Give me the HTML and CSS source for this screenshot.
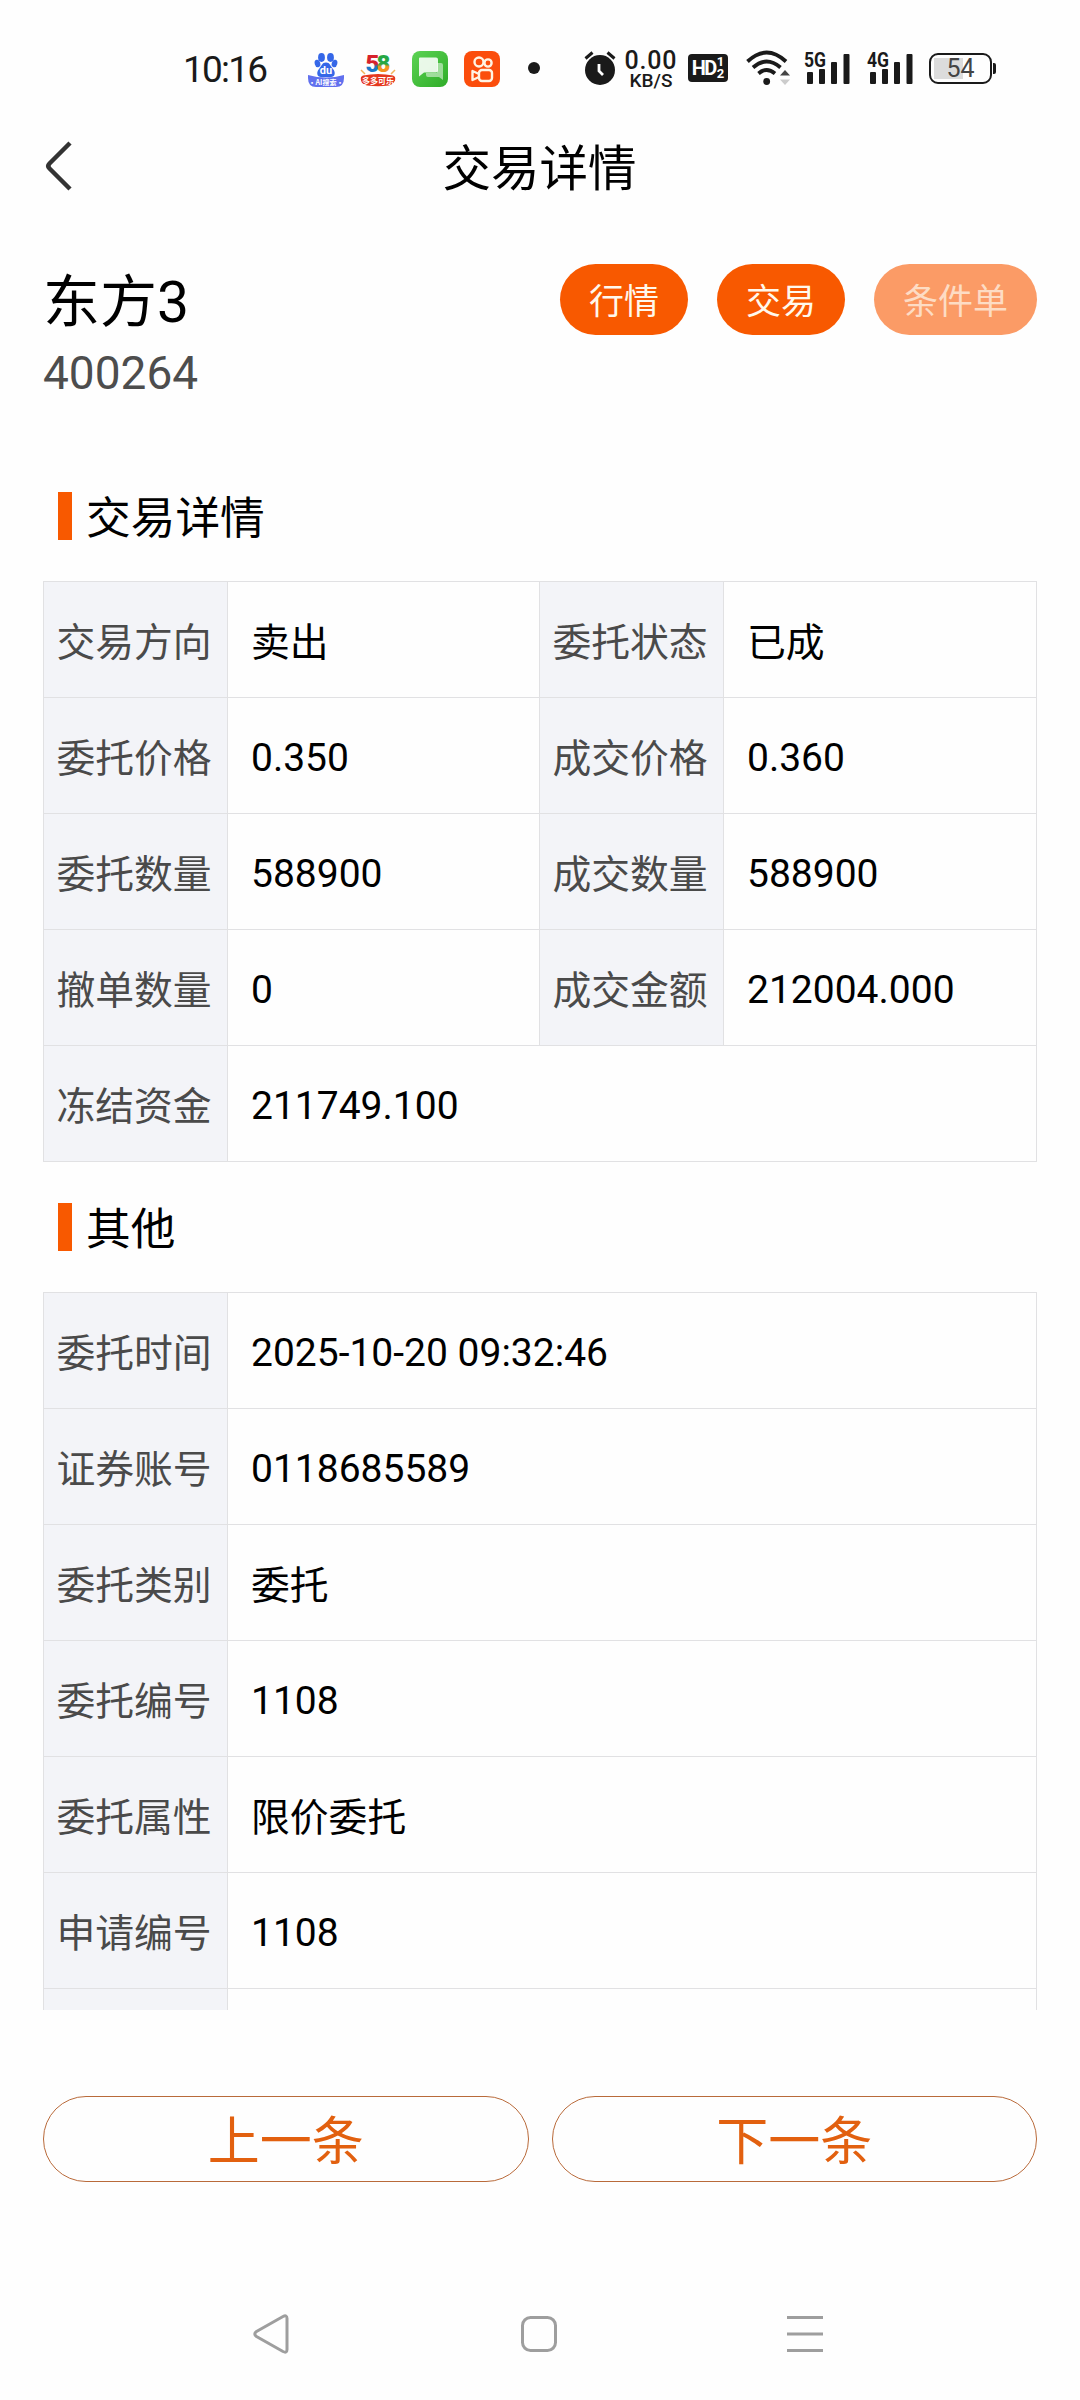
FILE: index.html
```html
<!DOCTYPE html>
<html lang="zh-CN">

<head>
    <meta charset="UTF-8">
    <meta name="viewport" content="width=device-width, initial-scale=1.0">
    <title>交易详情</title>
    <link rel="stylesheet" href="styles.css">
</head>

<body>
    <!-- 状态栏 -->
    <div class="status-bar">
        <span class="time">10:16</span>
        <div class="app-icons">
            <svg width="36" height="38" viewBox="0 0 36 38">
                <g fill="#3567e8">
                    <ellipse cx="13.500" cy="7.500" rx="3.400" ry="4.400"/>
                    <ellipse cx="22.500" cy="7.500" rx="3.400" ry="4.400"/>
                    <ellipse cx="9.500" cy="13.500" rx="2.800" ry="3.800" transform="rotate(-15 9.500 13.500)"/>
                    <ellipse cx="26.500" cy="13.500" rx="2.800" ry="3.800" transform="rotate(15 26.500 13.500)"/>
                    <path d="M18 12.500c4 0 4.500 3.500 7 6.500 3 3.500 2 8-2 8H13c-4 0-5-4.500-2-8 2.500-3 3-6.500 7-6.500z"/>
                </g>
                <text x="18" y="24" class="du">du</text>
                <path d="M0 25q18 5 36 0v3q0 9-8 9H8q-8 0-8-9z" fill="#6170ee"/>
                <text x="18" y="34.500" class="baidu-tag">·AI搜索·</text>
            </svg>
            <svg width="36" height="38" viewBox="0 0 36 38">
                <defs>
                    <linearGradient id="five" x1="0" y1="0" x2="0" y2="1">
                        <stop offset="0.500" stop-color="#d7222c"/>
                        <stop offset="0.600" stop-color="#1b78c8"/>
                    </linearGradient>
                    <linearGradient id="eight" x1="0" y1="0" x2="0" y2="1">
                        <stop offset="0.500" stop-color="#26a744"/>
                        <stop offset="0.600" stop-color="#f39423"/>
                    </linearGradient>
                </defs>
                <text x="5.500" y="22" class="num58" fill="url(#five)">5</text>
                <text x="16.500" y="22" class="num58" fill="url(#eight)">8</text>
                <path d="M1 20l4 4M35 20l-4 4" stroke="#f2b45a" stroke-width="1.500"/>
                <path d="M3 25.500q15-3 30 0 3 1 2 5-2 4-6 5-11 1.500-22 0-5-1-6-5-1-4 2-5z" fill="#e5381f"/>
                <text x="18" y="34" class="tag58">多多可乐</text>
            </svg>
            <svg width="36" height="38" viewBox="0 0 36 38">
                <defs>
                    <linearGradient id="green" x1="0" y1="0" x2="1" y2="1">
                        <stop offset="0" stop-color="#5cd354"/>
                        <stop offset="1" stop-color="#2fac28"/>
                    </linearGradient>
                </defs>
                <rect y="1" width="36" height="36" rx="8" fill="url(#green)"/>
                <path d="M25 13h4q2 0 2 2v15l-4-3H16q-2 0-2-2v-2h11z" fill="#fff" opacity=".5"/>
                <path d="M8 7.500h16q2 0 2 2v11q0 2-2 2H12l-5 4V8.500q0-1 1-1z" fill="#fff" opacity=".88"/>
            </svg>
            <svg width="36" height="38" viewBox="0 0 36 38">
                <rect y="1" width="36" height="36" rx="8" fill="#fb4d0c"/>
                <g fill="none" stroke="#fff4e4" stroke-width="2.400">
                    <circle cx="15" cy="12" r="4.500"/>
                    <circle cx="24" cy="13" r="3.600"/>
                    <rect x="15" y="20" width="13" height="11" rx="3"/>
                    <path d="M15 24l-6.500-3v9l6.500-3" stroke-linejoin="round"/>
                </g>
            </svg>
        </div>
        <span class="more-dot"></span>
        <svg class="alarm" width="32" height="36" viewBox="0 0 32 36">
            <circle cx="16" cy="20" r="15" fill="#1a1a1a"/>
            <path d="M1.500 8.500L8.500 2.500M30.500 8.500L23.500 2.500" stroke="#1a1a1a" stroke-width="3"/>
            <path d="M15 14v7l4 4" fill="none" stroke="#fff" stroke-width="2.800"/>
        </svg>
        <div class="speed">
            <span class="speed-num">0.00</span>
            <span class="speed-unit">KB/S</span>
        </div>
        <div class="hd">
            <b>HD</b>
            <span><i>1</i><i>2</i></span>
        </div>
        <svg class="wifi" width="45" height="36" viewBox="0 0 45 36">
            <g fill="none" stroke="#1a1a1a" stroke-width="3.800">
                <path d="M1.500 11.500Q20.500-6.500 40 11.500"/>
                <path d="M7 17.500Q20.500 5.500 34.500 17.500"/>
                <path d="M12.500 23.500Q20.500 16.500 29 23.500"/>
            </g>
            <circle cx="20.700" cy="31.500" r="3.400" fill="#1a1a1a"/>
            <path d="M34 25.500l5-5.500 5 5.500z" fill="#444"/>
            <path d="M34 29.500l5 5.500 5-5.500z" fill="#ccc"/>
        </svg>
        <svg class="signal" width="47" height="36" viewBox="0 0 47 36">
            <text x="0" y="17" textLength="22" lengthAdjust="spacingAndGlyphs">5G</text>
            <rect x="3" y="22" width="6" height="12" rx="1"/>
            <rect x="15" y="19" width="6" height="15" rx="1"/>
            <rect x="27" y="12" width="6" height="22" rx="1"/>
            <rect x="39.500" y="4" width="6" height="30" rx="1"/>
        </svg>
        <svg class="signal" width="47" height="36" viewBox="0 0 47 36">
            <text x="0" y="17" textLength="22" lengthAdjust="spacingAndGlyphs">4G</text>
            <rect x="3" y="22" width="6" height="12" rx="1"/>
            <rect x="15" y="19" width="6" height="15" rx="1"/>
            <rect x="27" y="12" width="6" height="22" rx="1"/>
            <rect x="39.500" y="4" width="6" height="30" rx="1"/>
        </svg>
        <div class="battery"><span>54</span></div>
        <span class="battery-cap"></span>
    </div>

    <!-- 标题 -->
    <header class="header">
        <svg class="back" width="28" height="52" viewBox="0 0 28 52">
            <path d="M25 3L4.500 23.500Q2 26 4.500 28.500L25 49" fill="none" stroke="#333" stroke-width="4.500"/>
        </svg>
        <h1>交易详情</h1>
    </header>

    <!-- 股票信息 -->
    <div class="stock">
        <div>
            <div class="stock-name">东方3</div>
            <div class="stock-code">400264</div>
        </div>
        <div class="actions">
            <button>行情</button>
            <button>交易</button>
            <button class="disabled">条件单</button>
        </div>
    </div>

    <main class="content">
        <h2>交易详情</h2>
        <div class="grid four">
            <div class="label">交易方向</div>
            <div class="value">卖出</div>
            <div class="label">委托状态</div>
            <div class="value">已成</div>
            <div class="label">委托价格</div>
            <div class="value num">0.350</div>
            <div class="label">成交价格</div>
            <div class="value num">0.360</div>
            <div class="label">委托数量</div>
            <div class="value num">588900</div>
            <div class="label">成交数量</div>
            <div class="value num">588900</div>
            <div class="label">撤单数量</div>
            <div class="value num">0</div>
            <div class="label">成交金额</div>
            <div class="value num">212004.000</div>
            <div class="label">冻结资金</div>
            <div class="value num wide">211749.100</div>
        </div>

        <h2>其他</h2>
        <div class="grid">
            <div class="label">委托时间</div>
            <div class="value num">2025-10-20 09:32:46</div>
            <div class="label">证券账号</div>
            <div class="value num">0118685589</div>
            <div class="label">委托类别</div>
            <div class="value">委托</div>
            <div class="label">委托编号</div>
            <div class="value num">1108</div>
            <div class="label">委托属性</div>
            <div class="value">限价委托</div>
            <div class="label">申请编号</div>
            <div class="value num">1108</div>
            <div class="label"></div>
            <div class="value"></div>
        </div>
    </main>

    <div class="pager">
        <button>上一条</button>
        <button>下一条</button>
    </div>

    <!-- 系统导航 -->
    <nav class="nav-bar">
        <svg width="36" height="44" viewBox="0 0 36 44">
            <path d="M30 4.500Q34 2.500 34 6.500V37.500Q34 41.500 30 39.500L3.500 24.500Q0 22 3.500 19.500Z"/>
        </svg>
        <svg width="36" height="44" viewBox="0 0 36 44">
            <rect x="2.500" y="5.500" width="33" height="33" rx="8"/>
        </svg>
        <svg width="36" height="44" viewBox="0 0 36 44">
            <path d="M0 5.500h36M0 22h36M0 38.500h36"/>
        </svg>
    </nav>
</body>

</html>
```

FILE: styles.css
```css
* {
    margin: 0;
    padding: 0;
    box-sizing: border-box;
}

body {
    width: 1080px;
    height: 2400px;
    overflow: hidden;
    background: #fefefe;
    color: #000;
    font-family: Roboto, "Noto Sans CJK SC", sans-serif;
}

button {
    border: none;
    font-family: inherit;
}

svg {
    display: block;
    flex-shrink: 0;
    overflow: visible;
}

/* 状态栏 */
.status-bar {
    display: flex;
    align-items: center;
    height: 136px;
    padding-left: 183px;
    color: #1a1a1a;
}

.time {
    width: 125px;
    font-size: 37px;
    letter-spacing: -1.8px;
    line-height: 40px;
    padding-top: 3px;
}

.app-icons {
    display: flex;
    gap: 16px;
    padding-top: 2px;
}

.du {
    font: bold 11px Roboto;
    fill: #fff;
    text-anchor: middle;
}

.baidu-tag,
.tag58 {
    font: bold 7px "Noto Sans CJK SC";
    fill: #fff;
    text-anchor: middle;
}

.tag58 {
    font-size: 8px;
}

.num58 {
    font: 900 24px Roboto;
}

.more-dot {
    width: 12px;
    height: 12px;
    margin-left: 28px;
    border-radius: 50%;
    background: #1a1a1a;
}

.alarm {
    margin-left: 44px;
}

.speed {
    display: flex;
    flex-direction: column;
    align-items: center;
    width: 54px;
    margin-left: 8px;
    padding-top: 3px;
    white-space: nowrap;
}

.speed-num {
    font-size: 25px;
    font-weight: 500;
    line-height: 21px;
    letter-spacing: 0.8px;
}

.speed-unit {
    font-size: 19px;
    font-weight: 500;
    line-height: 19px;
}

.hd {
    display: flex;
    align-items: center;
    justify-content: center;
    gap: 1px;
    width: 40px;
    height: 28px;
    margin-left: 10px;
    border-radius: 4px;
    background: #1a1a1a;
    color: #fff;
}

.hd b {
    font-size: 20px;
    letter-spacing: -1.5px;
}

.hd i {
    display: block;
    font-size: 13px;
    font-style: normal;
    font-weight: bold;
    line-height: 12px;
}

.wifi {
    margin-left: 18px;
}

.signal {
    margin-left: 13px;
    fill: #1a1a1a;
}

.signal + .signal {
    margin-left: 16px;
}

.signal text {
    font: bold 20px Roboto;
}

.battery {
    width: 63px;
    height: 31px;
    margin-left: 15px;
    padding: 3px;
    border: 2px solid #1a1a1a;
    border-radius: 9px;
    background: linear-gradient(#dcdcdc, #dcdcdc) 3px 3px / 29px 21px no-repeat;
    text-align: center;
}

.battery span {
    display: block;
    color: #444;
    font-size: 25px;
    line-height: 22px;
}

.battery-cap {
    width: 3px;
    height: 11px;
    margin-left: 1px;
    border-radius: 0 2px 2px 0;
    background: #1a1a1a;
}

/* 标题 */
.header {
    display: flex;
    align-items: center;
    height: 64px;
    padding: 0 45px;
}

.header .back {
    margin-bottom: 4px;
}

.header h1 {
    flex: 1;
    padding: 3px 29px 0 0;
    font-size: 48.5px;
    font-weight: 400;
    line-height: 64px;
    text-align: center;
}

/* 股票信息 */
.stock {
    display: flex;
    justify-content: space-between;
    height: 251px;
    padding: 64px 43px 0 43px;
}

.stock-name {
    padding-top: 2px;
    font-size: 57px;
    line-height: 74px;
}

.stock-code {
    margin-top: 5px;
    color: #4d4d4d;
    font-size: 46px;
    line-height: 56px;
}

.actions {
    display: flex;
    gap: 29px;
}

.actions button {
    height: 71px;
    padding: 0 29px 2px;
    border-radius: 36px;
    background: #f85900;
    color: #fff8ec;
    font-size: 35px;
}

.actions .disabled {
    background: #fb9b66;
    color: #fddcc4;
}

/* 内容区域，超出部分隐藏 */
.content {
    height: 1559px;
    padding: 0 43px;
    overflow: hidden;
}

.content h2 {
    display: flex;
    align-items: center;
    height: 130px;
    padding: 5px 0 0 15px;
    font-size: 44.7px;
    font-weight: 400;
    line-height: 48px;
}

.content h2::before {
    content: "";
    width: 14px;
    height: 48px;
    margin: 0 14px 5px 0;
    background: #f85900;
}

.grid {
    display: grid;
    grid-template-columns: 183px 808px;
    grid-auto-rows: 115px;
    gap: 1px;
    padding: 1px;
    background: #e1e1e3;
    font-size: 38.8px;
}

.grid.four {
    grid-template-columns: 183px 311px 183px 312px;
}

.label,
.value {
    display: flex;
    align-items: center;
    padding-bottom: 2px;
}

.label {
    justify-content: center;
    padding-right: 3px;
    background: #f3f4f8;
    color: #4a4a4a;
}

.value {
    padding-left: 23px;
    background: #fefefe;
}

.value.num {
    padding-top: 5px;
    padding-bottom: 0;
    font-size: 39px;
}

.wide {
    grid-column: span 3;
}

/* 上一条 / 下一条 */
.pager {
    display: flex;
    gap: 23px;
    padding: 86px 43px 0;
}

.pager button {
    flex: 1;
    height: 86px;
    padding-bottom: 4px;
    border: 1px solid #b96a3a;
    border-radius: 43px;
    background: transparent;
    color: #e2600f;
    font-size: 52px;
}

/* 系统导航 */
.nav-bar {
    display: flex;
    justify-content: space-between;
    padding: 130px 257px 0 253px;
}

.nav-bar svg {
    fill: none;
    stroke: #9e9e9e;
    stroke-width: 3;
}
```
